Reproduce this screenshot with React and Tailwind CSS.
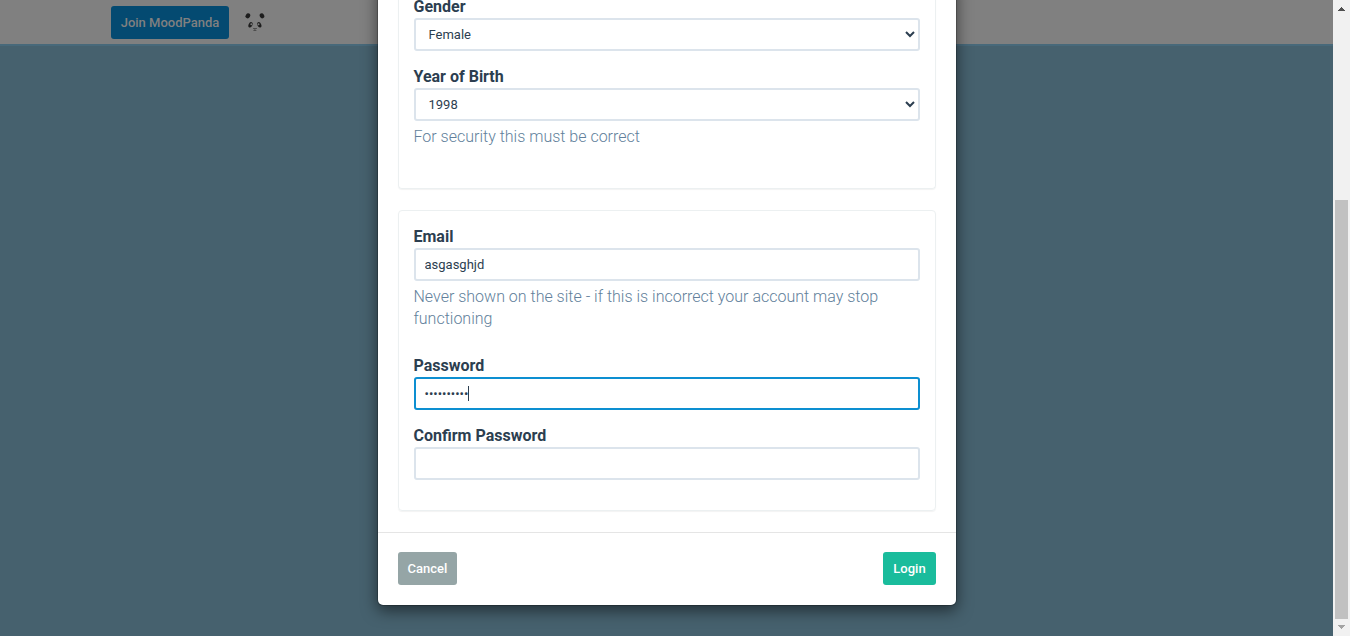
import React from 'react';

const field =
  'block h-[33px] w-full rounded-[3px] border-2 border-[#dce4ec] bg-white text-[13px] leading-[19px] text-[#2c3e50] outline-none';

function Label({ children }) {
  return <div className="-ml-[0.5px] h-[22px] text-[16px] leading-[22px] font-bold text-[#2c3e50]">{children}</div>;
}

function Help({ children }) {
  return <p className="-ml-[0.5px] mt-[5px] text-[16px] leading-[22px] font-light text-[#627f9b]">{children}</p>;
}

function Select({ value }) {
  return (
    <select className={`${field} pr-[9px] pl-[8.5px]`} defaultValue={value}>
      <option>{value}</option>
    </select>
  );
}

function Panda() {
  return (
    <svg width="20" height="19" viewBox="0 0 20 19" className="mt-[13px] ml-[16px]">
      <g fill="#1d1d1d">
        <ellipse cx="2.9" cy="2.8" rx="2.2" ry="2.6" transform="rotate(32 2.9 2.8)" />
        <ellipse cx="17" cy="2.8" rx="2.2" ry="2.6" transform="rotate(-32 17 2.8)" />
        <ellipse cx="5.5" cy="11.8" rx="1.9" ry="2.9" transform="rotate(25 5.5 11.8)" />
        <ellipse cx="14.3" cy="11.8" rx="1.9" ry="2.9" transform="rotate(-25 14.3 11.8)" />
      </g>
      <circle cx="6.3" cy="11.2" r="1" fill="#7c7c7c" />
      <circle cx="13.5" cy="11.2" r="1" fill="#7c7c7c" />
      <path d="M8 15.5h4M9.9 15.5v2M8.4 17.5h3" stroke="#444" strokeWidth=".8" fill="none" />
    </svg>
  );
}

function Scrollbar() {
  return (
    <div className="flex h-full w-[17px] flex-col items-start bg-[#f1f1f1]">
      <svg width="7" height="4" viewBox="0 0 7 4" className="mt-[7px] ml-[5px] shrink-0" shapeRendering="crispEdges">
        <path d="M3 0h1v1h1v1h1v1h1v1H0V3h1V2h1V1h1z" fill="#505050" />
      </svg>
      <div className="mt-[189px] ml-[2px] h-[419px] w-[13px] bg-[#c1c1c1]" />
      <svg width="7" height="4" viewBox="0 0 7 4" className="mt-[6px] ml-[5px] shrink-0" shapeRendering="crispEdges">
        <path d="M0 0h7v1H6v1H5v1H4v1H3V3H2V2H1V1H0z" fill="#a3a3a3" />
      </svg>
    </div>
  );
}

export default function App() {
  return (
    <div className="flex h-[636px] w-[1350px] overflow-hidden font-['Roboto',sans-serif]">
      <div className="relative h-full w-[1333px] overflow-hidden bg-[#46616e]">
        <header className="flex h-[46px] items-start border-b-2 border-[#48697a] bg-[#808080] pl-[111px]">
          <button className="mt-[6px] h-[33px] w-[118px] rounded-[3px] bg-[#044a71] text-[13px] font-medium text-[#808080]">
            Join MoodPanda
          </button>
          <Panda />
        </header>

        <div className="absolute -top-[20px] left-[377px] w-[580px] rounded-[6px] border border-black/20 bg-white bg-clip-padding shadow-[0_5px_15px_rgba(0,0,0,0.5)]">
          <div className="px-[20px] pb-[21px]">
            <section className="h-[208px] rounded-b-[4px] border border-t-0 border-[#ecf0f1] px-[15px] pt-[15px] shadow-[0_1px_1px_rgba(0,0,0,0.05)]">
              <Label>Gender</Label>
              <Select value="Female" />
              <div className="mt-[15px]">
                <Label>Year of Birth</Label>
                <Select value="1998" />
                <Help>For security this must be correct</Help>
              </div>
            </section>

            <section className="mt-[21px] h-[301px] rounded-[4px] border border-[#ecf0f1] p-[15px] shadow-[0_1px_1px_rgba(0,0,0,0.05)]">
              <Label>Email</Label>
              <input className={`${field} px-[8.5px]`} defaultValue="asgasghjd" />
              <Help>Never shown on the site - if this is incorrect your account may stop functioning</Help>
              <div className="mt-[25px]">
                <Label>Password</Label>
                <div className="flex h-[33px] items-center rounded-[3px] border-2 border-[#0d8fd1] px-[8.5px] text-[13px] text-[#2c3e50]">
                  <span>••••••••••</span>
                  <span className="-ml-[0.5px] h-[15px] w-px bg-[#2c3e50]" />
                </div>
              </div>
              <div className="mt-[15px]">
                <Label>Confirm Password</Label>
                <input className={`${field} px-[8.5px]`} />
              </div>
            </section>
          </div>

          <footer className="flex h-[73px] items-start justify-between border-t border-[#e5e5e5] px-[20px] pt-[19px]">
            <button className="h-[33px] w-[59px] rounded-[3px] bg-[#95a5a6] text-[13px] font-medium text-white">Cancel</button>
            <button className="h-[33px] w-[53px] rounded-[3px] bg-[#1abc9c] text-[13px] font-medium text-white">Login</button>
          </footer>
        </div>
      </div>
      <Scrollbar />
    </div>
  );
}
